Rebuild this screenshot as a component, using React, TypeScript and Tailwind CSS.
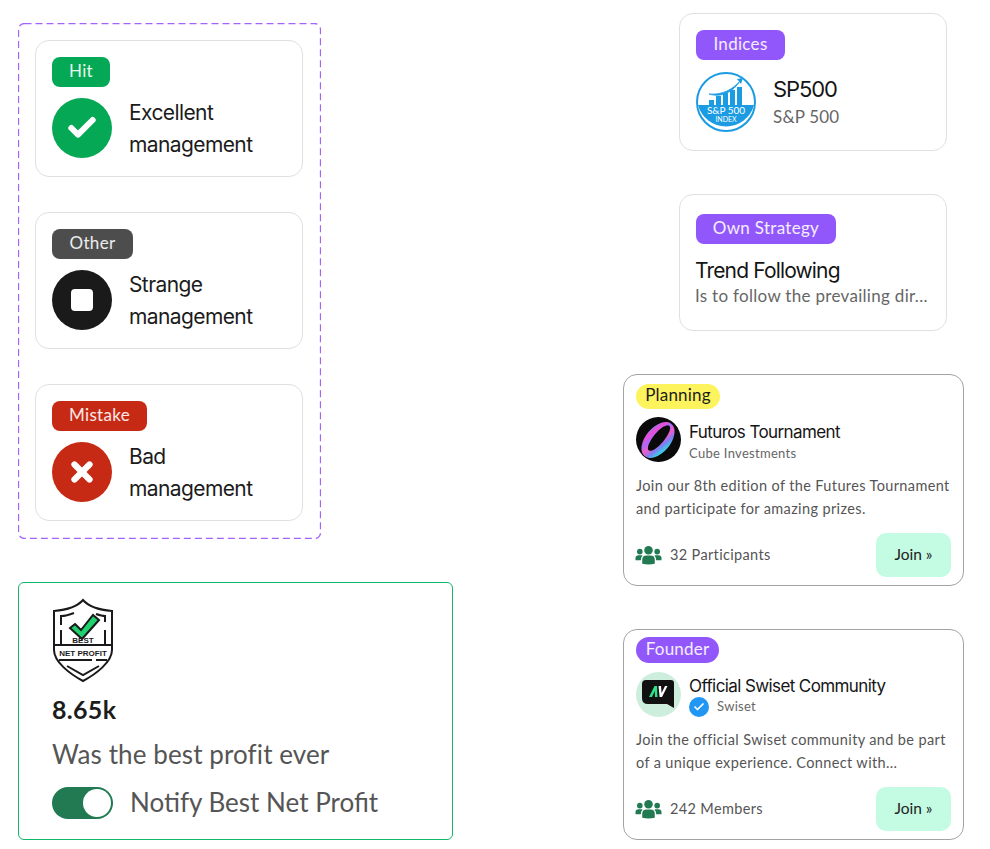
import { Check, X } from 'lucide-react'
import type { ReactNode } from 'react'

const sans = 'font-["Lato","Noto_Sans",sans-serif]'
const head = 'font-["Inter","Noto_Sans",sans-serif]'

function Badge({ label, className }: { label: string; className: string }) {
  return (
    <div className={`inline-flex items-center justify-center pb-[2px] text-white/90 text-[17px] tracking-[0.3px] ${sans} ${className}`}>
      {label}
    </div>
  )
}

function StatusCard({ badge, badgeClass, circle, line1, icon }: {
  badge: string
  badgeClass: string
  circle: string
  line1: string
  icon: ReactNode
}) {
  return (
    <div className="w-[268px] h-[137px] rounded-[14px] border border-[#e0e0e0] bg-white pl-4 pt-4">
      <Badge label={badge} className={`h-[30px] rounded-lg ${badgeClass}`} />
      <div className="flex items-center mt-[8px]">
        <div className={`w-[60px] h-[60px] rounded-full flex items-center justify-center ${circle}`}>{icon}</div>
        <div className={`ml-[17px] mt-[2px] text-[21px] leading-[32px] text-[#1c1c1c] ${head} tracking-[-0.6px]`}>
          {line1}
          <br />
          management
        </div>
      </div>
    </div>
  )
}

function ShieldLogo() {
  return (
    <svg width="62" height="84" viewBox="0 0 62 84" fill="none" stroke="#1a1a1a" strokeWidth="2">
      <path d="M31 2 C37 9 48 12 60 13 V52 C60 64 44 76 31 83 C18 76 2 64 2 52 V13 C14 12 25 9 31 2 Z" />
      <path d="M22 15 C17 17 13 18 9 18 V27 M9 32 V47 M53 47 V32 M53 24 V18 C50 18 47 17 44 16" />
      <path d="M2 47 H60 M7 62 H40 M44 62 H55" />
      <path d="M15 68 L31 77 L47 68" />
      <path d="M23 26 L29 32 L41 17 L47 22 L30 41 L18 30 Z" fill="#1fd16f" strokeWidth="2" />
      <text x="31" y="45" textAnchor="middle" fontSize="8" fontWeight="700" fill="#1a1a1a" stroke="none" fontFamily="Liberation Sans">BEST</text>
      <text x="31" y="58" textAnchor="middle" fontSize="8" fontWeight="700" fill="#1a1a1a" stroke="none" fontFamily="Liberation Sans">NET PROFIT</text>
    </svg>
  )
}

function SpLogo() {
  return (
    <svg width="60" height="60" viewBox="0 0 60 60">
      <circle cx="30" cy="30" r="29" fill="#fff" stroke="#1b9ce2" strokeWidth="2" />
      <path d="M2 33 H58 A29 29 0 0 1 2 33 Z" fill="#1b9ce2" />
      <rect x="13" y="28" width="5" height="5" fill="#1b9ce2" />
      <rect x="20" y="24" width="5" height="9" fill="#1b9ce2" />
      <rect x="27" y="21" width="5" height="12" fill="#1b9ce2" />
      <rect x="34" y="18" width="5" height="15" fill="#1b9ce2" />
      <rect x="41" y="15" width="5" height="18" fill="#1b9ce2" />
      <path d="M13 22 C26 23 36 18 44 9 C37 20 26 26 13 22 Z" fill="#1b9ce2" stroke="#1b9ce2" strokeWidth="0.8" />
      <path d="M41 7 L47 6 L45 12 Z" fill="#1b9ce2" />
      <text x="30" y="42" textAnchor="middle" fontSize="10" fill="#fff" fontFamily="Lato">S&amp;P 500</text>
      <text x="30" y="50" textAnchor="middle" fontSize="7" fill="#fff" fontFamily="Lato">INDEX</text>
    </svg>
  )
}

function CubeLogo() {
  return (
    <svg width="45" height="45" viewBox="0 0 45 45">
      <defs>
        <linearGradient id="ring" x1="0" y1="0" x2="1" y2="0.35">
          <stop offset="0" stopColor="#3fa9f5" />
          <stop offset="0.25" stopColor="#f04ad8" />
          <stop offset="0.45" stopColor="#a66cf8" />
          <stop offset="0.65" stopColor="#f25bc8" />
          <stop offset="0.85" stopColor="#7d7df5" />
          <stop offset="1" stopColor="#43c3e6" />
        </linearGradient>
      </defs>
      <circle cx="22.5" cy="22.5" r="22.5" fill="#0a0a0a" />
      <ellipse cx="22" cy="23" rx="12.5" ry="21" transform="rotate(40 22 23)" fill="url(#ring)" />
      <ellipse cx="23" cy="21" rx="5.5" ry="16" transform="rotate(40 23 21)" fill="#0a0a0a" />
    </svg>
  )
}

function SwisetLogo() {
  return (
    <svg width="45" height="45" viewBox="0 0 45 45">
      <circle cx="22.5" cy="22.5" r="22.5" fill="#cdeedd" />
      <path d="M10 8 H35 Q38 8 38 11 V36 L31 32 H12 Q6 32 6 26 V12 Q6 8 10 8 Z" fill="#111" />
      <path d="M13 25 L18.5 14 H21 L21.5 25 H19 L18.8 19 L16 25 Z" fill="#2fe08a" />
      <path d="M22.5 14 H25 L25.6 21 L29 14 H31.5 L26 25 H23.6 Z" fill="#fff" />
    </svg>
  )
}

function VerifiedIcon() {
  return (
    <div className="w-5 h-5 rounded-full bg-[#2196f3] flex items-center justify-center">
      <Check size={12} color="#fff" strokeWidth={3.5} />
    </div>
  )
}

function PeopleIcon() {
  return (
    <svg width="27" height="20" viewBox="0 0 28 20" fill="#217a52">
      <circle cx="14" cy="5" r="4.4" />
      <circle cx="5" cy="6.5" r="2.9" />
      <circle cx="23" cy="6.5" r="2.9" />
      <path d="M7.5 19 V15 Q7.5 10.5 12 10.5 H16 Q20.5 10.5 20.5 15 V19 Q14 20.5 7.5 19 Z" />
      <path d="M0.5 15.5 V13.5 Q0.5 10.2 3.8 10.2 H6.6 Q7.6 10.2 7.9 10.8 Q6 12 6 15.5 Z" />
      <path d="M27.5 15.5 V13.5 Q27.5 10.2 24.2 10.2 H21.4 Q20.4 10.2 20.1 10.8 Q22 12 22 15.5 Z" />
    </svg>
  )
}

function InfoCard({ badge, badgeClass, h, children }: { badge: string; badgeClass: string; h: string; children: ReactNode }) {
  return (
    <div className={`ml-[56px] w-[268px] rounded-[14px] border border-[#e0e0e0] bg-white pl-4 ${h}`}>
      <Badge label={badge} className={`h-[30px] rounded-lg bg-[#9257fb] ${badgeClass}`} />
      {children}
    </div>
  )
}

function CommunityCard({ badge, badgeClass, logo, title, sub, desc1, desc2, count, h }: {
  badge: string
  badgeClass: string
  logo: ReactNode
  title: string
  sub: ReactNode
  desc1: string
  desc2: string
  count: string
  h: string
}) {
  return (
    <div className={`w-[341px] rounded-[14px] border border-[#a3a3a3] bg-white pl-3 pr-3 ${h}`}>
      <div className={`inline-flex items-center justify-center rounded-full text-[17px] tracking-[0.2px] ${sans} ${badgeClass}`}>{badge}</div>
      <div className="flex items-center mt-[8px]">
        {logo}
        <div className="ml-2 mt-[4px] flex flex-col">
          <div className={`text-[17px] leading-[22px] text-[#151515] tracking-[-0.6px] ${head}`}>{title}</div>
          {sub}
        </div>
      </div>
      <div className={`mt-[11px] text-[14.5px] leading-[23px] text-[#555] tracking-[0.37px] whitespace-nowrap ${sans}`}>
        {desc1}
        <br />
        {desc2}
      </div>
      <div className="flex items-center justify-between mt-[13px]">
        <div className="flex items-center gap-2 -ml-px">
          <PeopleIcon />
          <span className={`text-[14.5px] text-[#555] tracking-[0.35px] ${sans}`}>{count}</span>
        </div>
        <div className={`w-[75px] h-[44px] rounded-[10px] bg-[#c3fbe3] flex items-center justify-center text-[15.5px] text-[#222] ${sans}`}>Join »</div>
      </div>
    </div>
  )
}

export default function App() {
  return (
    <div className="w-[990px] h-[849px] bg-white flex overflow-hidden">
      <div className="ml-[18px] w-[435px] pt-[23px] flex flex-col shrink-0">
        <div className="relative w-[303px] h-[516px] pl-[17px] pt-[17px] flex flex-col gap-[35px]">
          {/* css dashes come out too short, so the outline is an svg rect */}
          <svg className="absolute inset-0" width="303" height="516" fill="none">
            <rect x="0.5" y="0.5" width="302" height="515" rx="6" stroke="#a463fb" strokeWidth="1.3" strokeDasharray="7 4" />
          </svg>
          <StatusCard
            badge="Hit"
            badgeClass="bg-[#05a854] w-[58px]"
            circle="bg-[#05a854]"
            line1="Excellent"
            icon={<Check size={32} color="#fff" strokeWidth={4.5} />}
          />
          <StatusCard
            badge="Other"
            badgeClass="bg-[#4d4d4d] w-[81px]"
            circle="bg-[#1a1a1a]"
            line1="Strange"
            icon={<div className="w-[22px] h-[22px] rounded-[4px] bg-white" />}
          />
          <StatusCard
            badge="Mistake"
            badgeClass="bg-[#c72a14] w-[95px]"
            circle="bg-[#c72a14]"
            line1="Bad"
            icon={<X size={30} color="#fff" strokeWidth={5} />}
          />
        </div>
        <div className={`mt-[43px] h-[258px] rounded-md border border-[#12b76a] pl-[33px] pt-[15px] ${sans}`}>
          <ShieldLogo />
          <div className="mt-[9px] text-[25px] leading-[36px] font-bold text-[#1c1c1c] tracking-[0.3px]">8.65k</div>
          <div className="mt-[8px] text-[26px] leading-[38px] text-[#555] tracking-[0.1px]">Was the best profit ever</div>
          <div className="flex items-center mt-[10px]">
            <div className="w-[61px] h-8 rounded-full bg-[#217a52] flex items-center justify-end pr-[2px]">
              <div className="w-7 h-7 rounded-full bg-white" />
            </div>
            <span className="ml-[17px] text-[26px] text-[#555]">Notify Best Net Profit</span>
          </div>
        </div>
      </div>

      <div className="ml-[170px] pt-[13px] flex flex-col gap-[43px] shrink-0">
        <InfoCard h="h-[138px]" badge="Indices" badgeClass="w-[89px] mt-4">
          <div className="flex items-center mt-3">
            <SpLogo />
            <div className="ml-[17px]">
              <div className={`-mt-[2px] mb-px text-[22px] leading-[30px] text-[#151515] ${head} tracking-[-1.1px]`}>SP500</div>
              <div className={`text-[17px] leading-[24px] text-[#666] tracking-[0.2px] ${sans}`}>S&amp;P 500</div>
            </div>
          </div>
        </InfoCard>
        <InfoCard h="h-[137px]" badge="Own Strategy" badgeClass="w-[140px] mt-[19px]">
          <div className={`mt-[13px] text-[21px] leading-[28px] text-[#151515] tracking-[-0.85px] -ml-px ${head}`}>Trend Following</div>
          <div className={`text-[17px] leading-[22px] text-[#666] tracking-[0.3px] -ml-px ${sans}`}>Is to follow the prevailing dir...</div>
        </InfoCard>
        <CommunityCard
          h="h-[212px] pt-2"
          badge="Planning"
          badgeClass="w-[84px] h-[25px] pb-[3px] bg-[#fdf35c] text-[#1c1c1c]"
          logo={<CubeLogo />}
          title="Futuros Tournament"
          sub={<div className={`text-[13px] leading-[20px] text-[#666] tracking-[0.3px] ${sans}`}>Cube Investments</div>}
          desc1="Join our 8th edition of the Futures Tournament"
          desc2="and participate for amazing prizes."
          count="32 Participants"
        />
        <CommunityCard
          h="h-[211px] pt-[7px]"
          badge="Founder"
          badgeClass="w-[83px] h-[26px] pb-[2px] bg-[#9257fb] text-white/90"
          logo={<SwisetLogo />}
          title="Official Swiset Community"
          sub={
            <div className="flex items-center gap-2">
              <VerifiedIcon />
              <span className={`text-[13px] text-[#666] tracking-[0.3px] ${sans}`}>Swiset</span>
            </div>
          }
          desc1="Join the official Swiset community and be part"
          desc2="of a unique experience. Connect with..."
          count="242 Members"
        />
      </div>
    </div>
  )
}
